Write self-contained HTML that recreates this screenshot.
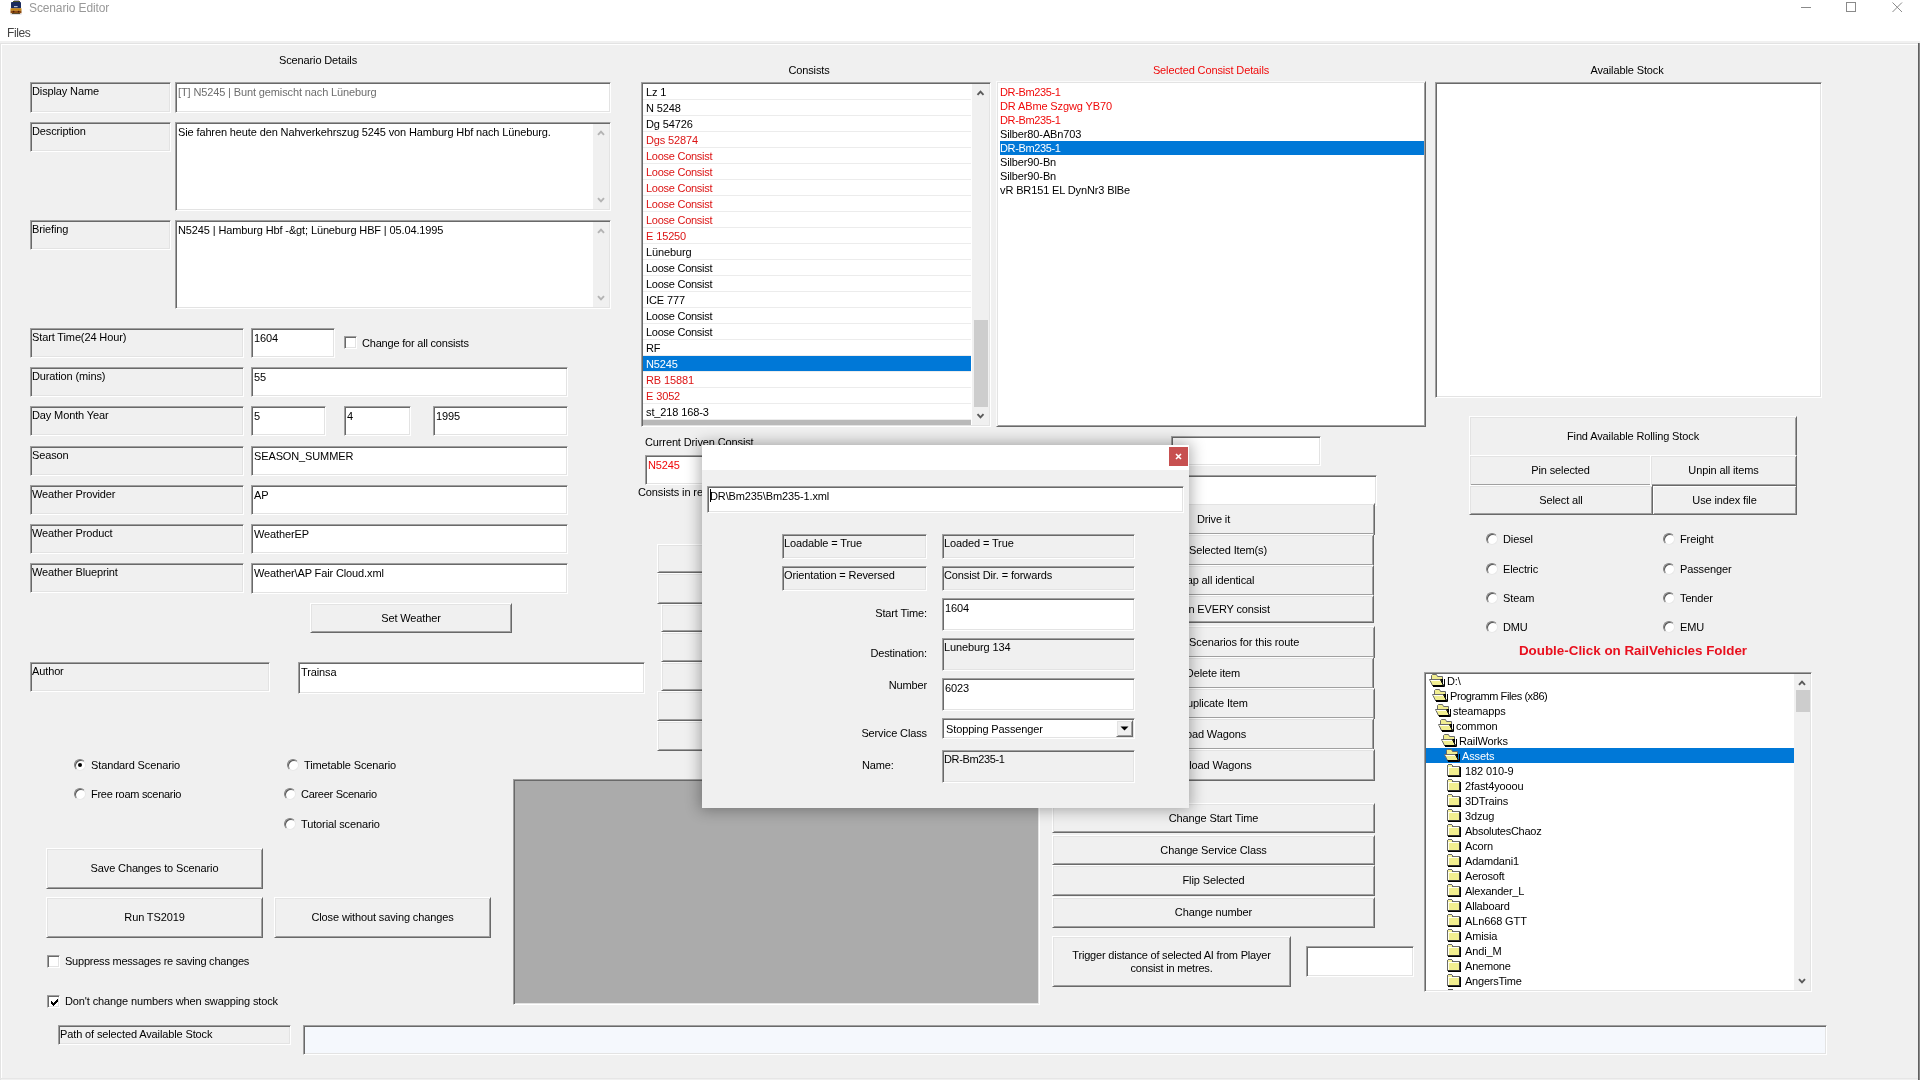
<!DOCTYPE html>
<html><head><meta charset="utf-8"><title>Scenario Editor</title>
<style>
*{box-sizing:border-box;margin:0;padding:0}
html,body{width:1920px;height:1080px;overflow:hidden;background:#fff}
body{position:relative;font-family:"Liberation Sans",sans-serif;font-size:11px;color:#000;line-height:13px;letter-spacing:-0.125px}
div{position:absolute}
.t{white-space:nowrap}
.c{text-align:center}
.sk{border:1px solid;border-color:#a0a0a0 #fff #fff #a0a0a0;box-shadow:inset 1px 1px 0 #696969,inset -1px -1px 0 #e3e3e3;overflow:hidden}
.lb{background:#f0f0f0}
.lb span{position:absolute;left:1px;top:2px;white-space:nowrap}
.tb{background:#fff}
.tb span{position:absolute;left:2px;top:3px;white-space:nowrap}
.bt{border:1px solid;border-color:#fff #696969 #696969 #fff;box-shadow:inset 1px 1px 0 #e3e3e3,inset -1px -1px 0 #a0a0a0;background:#f0f0f0;display:flex;align-items:center;justify-content:center;text-align:center;overflow:hidden}
.bt span{white-space:nowrap;position:relative;top:0px}
.foc{border-color:#696969;box-shadow:inset 1px 1px 0 #fff,inset -1px -1px 0 #a0a0a0}
.rd{width:12px;height:12px;border-radius:50%;background:#fff;border:1px solid;border-color:#808080 #e8e8e8 #e8e8e8 #808080;box-shadow:inset 1px 1px 0 #555}
.rd i{position:absolute;left:3px;top:3px;width:4px;height:4px;border-radius:50%;background:#000}
.cb{width:13px;height:13px;background:#fff}
.red{color:#f00a0a}
.rs{border:1px solid;border-color:#fbfbfb #696969 #696969 #fbfbfb;box-shadow:inset 1px 1px 0 #e3e3e3,inset -1px -1px 0 #a0a0a0}
.cmb span{left:3px;top:4px}
.redt span{color:#f00a0a}
.li span,.li2 span{position:absolute;left:3px;top:2px;white-space:nowrap}
.li{border-bottom:1px solid #ececec}
.li.red{color:#dc1414}
.li2 span{left:0px;top:1px}
.ml span{white-space:normal;line-height:13px}
.sel{background:#0078d7;color:#fff}
#root{left:0;top:0;width:1920px;height:1080px;will-change:transform}
</style></head><body><div id="root">
<div class="" style="left:0px;top:0px;width:1920px;height:41px;background:#fff"></div>
<div class="" style="left:0px;top:41px;width:1920px;height:1039px;background:#f0f0f0"></div>
<div class="" style="left:0px;top:43px;width:1920px;height:1px;background:#e3e3e3"></div>
<div class="" style="left:0px;top:43px;width:1px;height:1037px;background:#e3e3e3"></div>
<div class="" style="left:1px;top:44px;width:1917px;height:1px;background:#fff"></div>
<div class="" style="left:1px;top:44px;width:1px;height:1034px;background:#fff"></div>
<div class="" style="left:1918px;top:43px;width:1px;height:1037px;background:#606060"></div>
<div class="" style="left:1919px;top:43px;width:1px;height:1037px;background:#8a8a8a"></div>
<div class="" style="left:0px;top:1078px;width:1918px;height:1px;background:#e6e6e6"></div>
<svg style="position:absolute;left:8px;top:0" width="16" height="16" viewBox="8 0 16 16"><rect x="14" y="0" width="5" height="1" fill="#b4adc4"/><rect x="13" y="1" width="7" height="1.3" fill="#4a5024"/><rect x="11" y="2" width="10" height="6.6" rx="0.8" fill="#1c2c5e"/><rect x="14" y="6" width="3.6" height="1.2" fill="#b8c0d4"/><rect x="10.5" y="8.3" width="11" height="2.5" fill="#c88410"/><rect x="10.5" y="10.7" width="11" height="2.6" fill="#8e4c12"/><circle cx="13.6" cy="11.6" r="0.9" fill="#4a1a08"/><circle cx="18.6" cy="11.6" r="0.9" fill="#4a1a08"/><rect x="12" y="13.2" width="8" height="0.9" fill="#3a3010"/><rect x="10.5" y="14.1" width="11" height="0.8" fill="#dcdce8"/></svg>
<div class="t " style="left:29px;top:1px;font-size:12px;line-height:15px;color:#999">Scenario Editor</div>
<div class="t " style="left:7px;top:26px;font-size:12px;line-height:15px;color:#444;letter-spacing:-0.4px">Files</div>
<svg style="position:absolute;left:1800px;top:0" width="110" height="16" viewBox="0 0 110 16"><g stroke="#8a8a8a" stroke-width="1" fill="none"><path d="M1 7.5H11"/><rect x="46.5" y="2.5" width="9" height="9"/><path d="M92.5 2.5l9.5 9.5M102 2.5l-9.5 9.5"/></g></svg>
<div class="t c " style="left:118px;width:400px;top:54px;">Scenario Details</div>
<div class="sk lb" style="left:30px;top:82px;width:141px;height:31px;"><span>Display Name</span></div>
<div class="sk lb" style="left:30px;top:122px;width:141px;height:30px;"><span>Description</span></div>
<div class="sk lb" style="left:30px;top:220px;width:141px;height:30px;"><span>Briefing</span></div>
<div class="sk tb " style="left:175px;top:82px;width:436px;height:31px;color:#6d6d6d"><span>[T] N5245 | Bunt gemischt nach L&uuml;neburg</span></div>
<div class="sk tb " style="left:175px;top:122px;width:436px;height:89px;"><span>Sie fahren heute den Nahverkehrszug 5245 von Hamburg Hbf nach L&uuml;neburg.</span></div>
<div class="sk tb " style="left:175px;top:220px;width:436px;height:89px;"><span>N5245 | Hamburg Hbf -&amp;gt; L&uuml;neburg HBF | 05.04.1995</span></div>
<svg style="position:absolute;left:593px;top:124px" width="16" height="85" viewBox="0 0 16 85"><rect width="16" height="85" fill="#f0f0f0"/><g fill="none" stroke="#b4b4b4" stroke-width="1.9"><path d="M5.0 10.8L8.0 7.6L11.0 10.8"/><path d="M5.0 74.2L8.0 77.4L11.0 74.2"/></g></svg>
<svg style="position:absolute;left:593px;top:222px" width="16" height="85" viewBox="0 0 16 85"><rect width="16" height="85" fill="#f0f0f0"/><g fill="none" stroke="#b4b4b4" stroke-width="1.9"><path d="M5.0 10.8L8.0 7.6L11.0 10.8"/><path d="M5.0 74.2L8.0 77.4L11.0 74.2"/></g></svg>
<div class="sk lb" style="left:30px;top:328px;width:214px;height:30px;"><span>Start Time(24 Hour)</span></div>
<div class="sk lb" style="left:30px;top:367px;width:214px;height:30px;"><span>Duration (mins)</span></div>
<div class="sk lb" style="left:30px;top:406px;width:214px;height:30px;"><span>Day Month Year</span></div>
<div class="sk lb" style="left:30px;top:446px;width:214px;height:30px;"><span>Season</span></div>
<div class="sk lb" style="left:30px;top:485px;width:214px;height:30px;"><span>Weather Provider</span></div>
<div class="sk lb" style="left:30px;top:524px;width:214px;height:30px;"><span>Weather Product</span></div>
<div class="sk lb" style="left:30px;top:563px;width:214px;height:30px;"><span>Weather Blueprint</span></div>
<div class="sk tb " style="left:251px;top:328px;width:84px;height:30px;"><span>1604</span></div>
<div class="sk cb" style="left:344px;top:336px"></div>
<div class="t " style="left:362px;top:337px;"><b style="font-weight:normal;letter-spacing:-0.2px">Change for all consists</b></div>
<div class="sk tb " style="left:251px;top:367px;width:317px;height:30px;"><span>55</span></div>
<div class="sk tb " style="left:251px;top:406px;width:75px;height:30px;"><span>5</span></div>
<div class="sk tb " style="left:344px;top:406px;width:67px;height:30px;"><span>4</span></div>
<div class="sk tb " style="left:433px;top:406px;width:135px;height:30px;"><span>1995</span></div>
<div class="sk tb " style="left:251px;top:446px;width:317px;height:30px;"><span>SEASON_SUMMER</span></div>
<div class="sk tb " style="left:251px;top:485px;width:317px;height:30px;"><span>AP</span></div>
<div class="sk tb " style="left:251px;top:524px;width:317px;height:30px;"><span>WeatherEP</span></div>
<div class="sk tb " style="left:251px;top:563px;width:317px;height:31px;"><span>Weather\AP Fair Cloud.xml</span></div>
<div class="bt " style="left:310px;top:603px;width:202px;height:30px;"><span>Set Weather</span></div>
<div class="sk lb" style="left:30px;top:662px;width:240px;height:30px;"><span>Author</span></div>
<div class="sk tb " style="left:298px;top:662px;width:347px;height:32px;"><span>Trainsa</span></div>
<div class="rd" style="left:74px;top:759px"><i></i></div>
<div class="t " style="left:91px;top:759px;">Standard Scenario</div>
<div class="rd" style="left:74px;top:788px"></div>
<div class="t " style="left:91px;top:788px;"><b style="font-weight:normal;letter-spacing:-0.29px">Free roam scenario</b></div>
<div class="rd" style="left:287px;top:759px"></div>
<div class="t " style="left:304px;top:759px;">Timetable Scenario</div>
<div class="rd" style="left:284px;top:788px"></div>
<div class="t " style="left:301px;top:788px;"><b style="font-weight:normal;letter-spacing:-0.285px">Career Scenario</b></div>
<div class="rd" style="left:284px;top:818px"></div>
<div class="t " style="left:301px;top:818px;">Tutorial scenario</div>
<div class="bt " style="left:46px;top:848px;width:217px;height:41px;"><span>Save Changes to Scenario</span></div>
<div class="bt " style="left:46px;top:897px;width:217px;height:41px;"><span>Run TS2019</span></div>
<div class="bt " style="left:274px;top:897px;width:217px;height:41px;"><span>Close without saving changes</span></div>
<div class="sk cb" style="left:47px;top:955px"></div>
<div class="t " style="left:65px;top:955px;"><b style="font-weight:normal;letter-spacing:-0.225px">Suppress messages re saving changes</b></div>
<div class="sk cb" style="left:47px;top:995px"><svg style="position:absolute;left:2px;top:2px" width="9" height="9" viewBox="0 0 9 9" shape-rendering="crispEdges"><path d="M1 3v3l2 2 5-5V0L3 5z" fill="#000"/></svg></div>
<div class="t " style="left:65px;top:995px;">Don't change numbers when swapping stock</div>
<div class="sk lb" style="left:58px;top:1025px;width:233px;height:20px;"><span>Path of selected Available Stock</span></div>
<div class="sk tb " style="left:303px;top:1025px;width:1524px;height:30px;background:#f5f8fd"><span></span></div>
<div class="sk" style="left:513px;top:779px;width:527px;height:226px;background:#ababab"></div>
<div class="t c " style="left:609px;width:400px;top:64px;">Consists</div>
<div class="sk" style="left:641px;top:82px;width:350px;height:345px;background:#fff"></div>
<div class="li " style="left:643px;top:84px;width:328px;height:16px"><span>Lz 1</span></div>
<div class="li " style="left:643px;top:100px;width:328px;height:16px"><span>N 5248</span></div>
<div class="li " style="left:643px;top:116px;width:328px;height:16px"><span>Dg 54726</span></div>
<div class="li red" style="left:643px;top:132px;width:328px;height:16px"><span>Dgs 52874</span></div>
<div class="li red" style="left:643px;top:148px;width:328px;height:16px"><span><b style="font-weight:normal;letter-spacing:-0.26px">Loose Consist</b></span></div>
<div class="li red" style="left:643px;top:164px;width:328px;height:16px"><span><b style="font-weight:normal;letter-spacing:-0.26px">Loose Consist</b></span></div>
<div class="li red" style="left:643px;top:180px;width:328px;height:16px"><span><b style="font-weight:normal;letter-spacing:-0.26px">Loose Consist</b></span></div>
<div class="li red" style="left:643px;top:196px;width:328px;height:16px"><span><b style="font-weight:normal;letter-spacing:-0.26px">Loose Consist</b></span></div>
<div class="li red" style="left:643px;top:212px;width:328px;height:16px"><span><b style="font-weight:normal;letter-spacing:-0.26px">Loose Consist</b></span></div>
<div class="li red" style="left:643px;top:228px;width:328px;height:16px"><span>E 15250</span></div>
<div class="li " style="left:643px;top:244px;width:328px;height:16px"><span>L&uuml;neburg</span></div>
<div class="li " style="left:643px;top:260px;width:328px;height:16px"><span><b style="font-weight:normal;letter-spacing:-0.26px">Loose Consist</b></span></div>
<div class="li " style="left:643px;top:276px;width:328px;height:16px"><span><b style="font-weight:normal;letter-spacing:-0.26px">Loose Consist</b></span></div>
<div class="li " style="left:643px;top:292px;width:328px;height:16px"><span>ICE 777</span></div>
<div class="li " style="left:643px;top:308px;width:328px;height:16px"><span><b style="font-weight:normal;letter-spacing:-0.26px">Loose Consist</b></span></div>
<div class="li " style="left:643px;top:324px;width:328px;height:16px"><span><b style="font-weight:normal;letter-spacing:-0.26px">Loose Consist</b></span></div>
<div class="li " style="left:643px;top:340px;width:328px;height:16px"><span>RF</span></div>
<div class="li sel" style="left:643px;top:356px;width:328px;height:16px"><span>N5245</span></div>
<div class="li red" style="left:643px;top:372px;width:328px;height:16px"><span>RB 15881</span></div>
<div class="li red" style="left:643px;top:388px;width:328px;height:16px"><span>E 3052</span></div>
<div class="li " style="left:643px;top:404px;width:328px;height:16px"><span>st_218 168-3</span></div>
<div class="" style="left:972px;top:84px;width:17px;height:341px;background:#f0f0f0"></div>
<div class="" style="left:974px;top:320px;width:14px;height:87px;background:#cdcdcd"></div>
<svg style="position:absolute;left:972px;top:84px" width="17" height="341" viewBox="0 0 17 341"><g fill="none" stroke="#5a5a5a" stroke-width="1.9"><path d="M5.5 10.8L8.5 7.6L11.5 10.8"/><path d="M5.5 330.2L8.5 333.4L11.5 330.2"/></g></svg>
<div class="" style="left:643px;top:420px;width:328px;height:5px;background:#b9b9b9"></div>
<div class="t c red" style="left:1011px;width:400px;top:64px;">Selected Consist Details</div>
<div class="rs" style="left:996px;top:81px;width:430px;height:346px;background:#fff"></div>
<div class="li2 red" style="left:1000px;top:85px;width:424px;height:14px"><span><b style="font-weight:normal;letter-spacing:-0.36px">DR-Bm235-1</b></span></div>
<div class="li2 red" style="left:1000px;top:99px;width:424px;height:14px"><span>DR ABme Szgwg YB70</span></div>
<div class="li2 red" style="left:1000px;top:113px;width:424px;height:14px"><span><b style="font-weight:normal;letter-spacing:-0.36px">DR-Bm235-1</b></span></div>
<div class="li2 " style="left:1000px;top:127px;width:424px;height:14px"><span>Silber80-ABn703</span></div>
<div class="li2 sel" style="left:1000px;top:141px;width:424px;height:14px"><span><b style="font-weight:normal;letter-spacing:-0.36px">DR-Bm235-1</b></span></div>
<div class="li2 " style="left:1000px;top:155px;width:424px;height:14px"><span>Silber90-Bn</span></div>
<div class="li2 " style="left:1000px;top:169px;width:424px;height:14px"><span>Silber90-Bn</span></div>
<div class="li2 " style="left:1000px;top:183px;width:424px;height:14px"><span>vR BR151 EL DynNr3 BlBe</span></div>
<div class="t c " style="left:1427px;width:400px;top:64px;">Available Stock</div>
<div class="sk" style="left:1435px;top:82px;width:387px;height:316px;background:#fff"></div>
<div class="bt " style="left:1469px;top:416px;width:328px;height:41px;"><span>Find Available Rolling Stock</span></div>
<div class="bt " style="left:1469px;top:455px;width:183px;height:31px;"><span>Pin selected</span></div>
<div class="bt " style="left:1650px;top:455px;width:147px;height:31px;"><span>Unpin all items</span></div>
<div class="bt " style="left:1469px;top:485px;width:184px;height:30px;"><span>Select all</span></div>
<div class="bt foc" style="left:1652px;top:485px;width:145px;height:30px;"><span>Use index file</span></div>
<div class="rd" style="left:1486px;top:533px"></div>
<div class="t " style="left:1503px;top:533px;">Diesel</div>
<div class="rd" style="left:1486px;top:563px"></div>
<div class="t " style="left:1503px;top:563px;">Electric</div>
<div class="rd" style="left:1486px;top:592px"></div>
<div class="t " style="left:1503px;top:592px;">Steam</div>
<div class="rd" style="left:1486px;top:621px"></div>
<div class="t " style="left:1503px;top:621px;">DMU</div>
<div class="rd" style="left:1663px;top:533px"></div>
<div class="t " style="left:1680px;top:533px;">Freight</div>
<div class="rd" style="left:1663px;top:563px"></div>
<div class="t " style="left:1680px;top:563px;">Passenger</div>
<div class="rd" style="left:1663px;top:592px"></div>
<div class="t " style="left:1680px;top:592px;">Tender</div>
<div class="rd" style="left:1663px;top:621px"></div>
<div class="t " style="left:1680px;top:621px;">EMU</div>
<div class="t c " style="left:1433px;width:400px;top:643px;font-weight:bold;font-size:13.4px;line-height:16px;color:#e8101e;letter-spacing:-0.01px">Double-Click on RailVehicles Folder</div>
<div class="sk" style="left:1424px;top:672px;width:388px;height:320px;background:#fff"></div>
<svg width="0" height="0" style="position:absolute"><defs>
<g id="fc" shape-rendering="crispEdges"><rect x="2" y="0" width="4" height="1" fill="#6a6a6a"/><rect x="1" y="1" width="6" height="2" fill="#6a6a6a"/><rect x="1" y="2" width="13" height="10" fill="#6a6a6a"/><rect x="2" y="1" width="4" height="2" fill="#f6f3a0"/><rect x="2" y="3" width="11" height="8" fill="#f1ee90"/><rect x="2" y="3" width="11" height="1" fill="#fffff4"/><rect x="2" y="3" width="1" height="8" fill="#fffff4"/><rect x="13" y="3" width="1" height="9" fill="#303030"/><rect x="14" y="3" width="1" height="10" fill="#000"/><rect x="2" y="12" width="13" height="1" fill="#000"/><rect x="2" y="11" width="12" height="1" fill="#303030"/></g>
<g id="fo"><path d="M3.5 5.5V1.5L4.5 0.5H8.5L9.5 2.5H14.5V5.5" fill="#f1ee90" stroke="#6a6a6a" stroke-width="1"/><path d="M12 5H15V12Z" fill="#000"/><path d="M1.5 5.5H12.5L15.5 11.5H4.5Z" fill="#f1ee90" stroke="#6a6a6a" stroke-width="1"/><path d="M2.5 6.5H12" stroke="#fffff4" stroke-width="1"/><path d="M12.5 5.5L15.5 11.5H4.5" fill="none" stroke="#000" stroke-width="1"/><path d="M5 12.5H16.5V5" fill="none" stroke="#000" stroke-width="1"/></g>
</defs></svg>
<svg style="position:absolute;left:1428px;top:674px" width="17" height="14" viewBox="0 0 17 14"><use href="#fo"/></svg>
<div class="t " style="left:1447px;top:675px;">D:\</div>
<svg style="position:absolute;left:1431px;top:689px" width="17" height="14" viewBox="0 0 17 14"><use href="#fo"/></svg>
<div class="t " style="left:1450px;top:690px;letter-spacing:-0.42px;">Programm Files (x86)</div>
<svg style="position:absolute;left:1434px;top:704px" width="17" height="14" viewBox="0 0 17 14"><use href="#fo"/></svg>
<div class="t " style="left:1453px;top:705px;">steamapps</div>
<svg style="position:absolute;left:1437px;top:719px" width="17" height="14" viewBox="0 0 17 14"><use href="#fo"/></svg>
<div class="t " style="left:1456px;top:720px;">common</div>
<svg style="position:absolute;left:1440px;top:734px" width="17" height="14" viewBox="0 0 17 14"><use href="#fo"/></svg>
<div class="t " style="left:1459px;top:735px;">RailWorks</div>
<div class="" style="left:1426px;top:748px;width:368px;height:15px;background:#0078d7"></div>
<svg style="position:absolute;left:1443px;top:749px" width="17" height="14" viewBox="0 0 17 14"><use href="#fo"/></svg>
<div class="t " style="left:1462px;top:750px;color:#fff;">Assets</div>
<svg style="position:absolute;left:1446px;top:764px" width="17" height="14" viewBox="0 0 17 14"><use href="#fc"/></svg>
<div class="t " style="left:1465px;top:765px;">182 010-9</div>
<svg style="position:absolute;left:1446px;top:779px" width="17" height="14" viewBox="0 0 17 14"><use href="#fc"/></svg>
<div class="t " style="left:1465px;top:780px;">2fast4yooou</div>
<svg style="position:absolute;left:1446px;top:794px" width="17" height="14" viewBox="0 0 17 14"><use href="#fc"/></svg>
<div class="t " style="left:1465px;top:795px;">3DTrains</div>
<svg style="position:absolute;left:1446px;top:809px" width="17" height="14" viewBox="0 0 17 14"><use href="#fc"/></svg>
<div class="t " style="left:1465px;top:810px;">3dzug</div>
<svg style="position:absolute;left:1446px;top:824px" width="17" height="14" viewBox="0 0 17 14"><use href="#fc"/></svg>
<div class="t " style="left:1465px;top:825px;"><b style="font-weight:normal;letter-spacing:-0.265px">AbsolutesChaoz</b></div>
<svg style="position:absolute;left:1446px;top:839px" width="17" height="14" viewBox="0 0 17 14"><use href="#fc"/></svg>
<div class="t " style="left:1465px;top:840px;">Acorn</div>
<svg style="position:absolute;left:1446px;top:854px" width="17" height="14" viewBox="0 0 17 14"><use href="#fc"/></svg>
<div class="t " style="left:1465px;top:855px;"><b style="font-weight:normal;letter-spacing:-0.2px">Adamdani1</b></div>
<svg style="position:absolute;left:1446px;top:869px" width="17" height="14" viewBox="0 0 17 14"><use href="#fc"/></svg>
<div class="t " style="left:1465px;top:870px;"><b style="font-weight:normal;letter-spacing:-0.2px">Aerosoft</b></div>
<svg style="position:absolute;left:1446px;top:884px" width="17" height="14" viewBox="0 0 17 14"><use href="#fc"/></svg>
<div class="t " style="left:1465px;top:885px;"><b style="font-weight:normal;letter-spacing:-0.24px">Alexander_L</b></div>
<svg style="position:absolute;left:1446px;top:899px" width="17" height="14" viewBox="0 0 17 14"><use href="#fc"/></svg>
<div class="t " style="left:1465px;top:900px;"><b style="font-weight:normal;letter-spacing:-0.2px">Allaboard</b></div>
<svg style="position:absolute;left:1446px;top:914px" width="17" height="14" viewBox="0 0 17 14"><use href="#fc"/></svg>
<div class="t " style="left:1465px;top:915px;">ALn668 GTT</div>
<svg style="position:absolute;left:1446px;top:929px" width="17" height="14" viewBox="0 0 17 14"><use href="#fc"/></svg>
<div class="t " style="left:1465px;top:930px;">Amisia</div>
<svg style="position:absolute;left:1446px;top:944px" width="17" height="14" viewBox="0 0 17 14"><use href="#fc"/></svg>
<div class="t " style="left:1465px;top:945px;">Andi_M</div>
<svg style="position:absolute;left:1446px;top:959px" width="17" height="14" viewBox="0 0 17 14"><use href="#fc"/></svg>
<div class="t " style="left:1465px;top:960px;"><b style="font-weight:normal;letter-spacing:-0.2px">Anemone</b></div>
<svg style="position:absolute;left:1446px;top:974px" width="17" height="14" viewBox="0 0 17 14"><use href="#fc"/></svg>
<div class="t " style="left:1465px;top:975px;"><b style="font-weight:normal;letter-spacing:-0.23px">AngersTime</b></div>
<svg style="position:absolute;left:1447px;top:989px" width="17" height="1" viewBox="0 0 17 1"><rect x="1" y="0" width="5" height="1" fill="#555"/></svg>
<div class="" style="left:1794px;top:674px;width:16px;height:316px;background:#f0f0f0"></div>
<div class="" style="left:1796px;top:690px;width:14px;height:22px;background:#cdcdcd"></div>
<svg style="position:absolute;left:1794px;top:674px" width="16" height="316" viewBox="0 0 16 316"><g fill="none" stroke="#5a5a5a" stroke-width="1.9"><path d="M5.0 10.8L8.0 7.6L11.0 10.8"/><path d="M5.0 305.2L8.0 308.4L11.0 305.2"/></g></svg>
<div class="t " style="left:645px;top:436px;">Current Driven Consist</div>
<div class="sk tb redt" style="left:645px;top:455px;width:115px;height:30px;"><span>N5245</span></div>
<div class="t " style="left:638px;top:486px;">Consists in reverse</div>
<div class="sk tb " style="left:1171px;top:436px;width:150px;height:30px;"><span></span></div>
<div class="sk tb " style="left:1052px;top:475px;width:325px;height:31px;"><span></span></div>
<div class="bt " style="left:657px;top:544px;width:243px;height:29px;"><span></span></div>
<div class="bt " style="left:657px;top:573px;width:243px;height:31px;"><span></span></div>
<div class="bt " style="left:661px;top:604px;width:239px;height:28px;"><span></span></div>
<div class="bt " style="left:661px;top:632px;width:239px;height:30px;"><span></span></div>
<div class="bt " style="left:661px;top:662px;width:239px;height:29px;"><span></span></div>
<div class="bt " style="left:657px;top:691px;width:243px;height:30px;"><span></span></div>
<div class="bt " style="left:657px;top:721px;width:243px;height:30px;"><span></span></div>
<div class="bt " style="left:1052px;top:503px;width:323px;height:32px;"><span>Drive it</span></div>
<div class="bt " style="left:1052px;top:534px;width:322px;height:32px;"><span>Swap Selected Item(s)</span></div>
<div class="bt " style="left:1052px;top:565px;width:322px;height:31px;"><span>Swap all identical</span></div>
<div class="bt " style="left:1052px;top:595px;width:322px;height:28px;"><span>Swap in EVERY consist</span></div>
<div class="bt " style="left:1052px;top:626px;width:323px;height:32px;"><span>Show all the Scenarios for this route</span></div>
<div class="bt " style="left:1052px;top:657px;width:322px;height:32px;"><span>Delete item</span></div>
<div class="bt " style="left:1052px;top:688px;width:323px;height:31px;"><span>Duplicate Item</span></div>
<div class="bt " style="left:1052px;top:718px;width:322px;height:32px;"><span>Load Wagons</span></div>
<div class="bt " style="left:1052px;top:749px;width:323px;height:32px;"><span>Unload Wagons</span></div>
<div class="bt " style="left:1052px;top:803px;width:323px;height:30px;"><span>Change Start Time</span></div>
<div class="bt " style="left:1052px;top:835px;width:323px;height:30px;"><span>Change Service Class</span></div>
<div class="bt " style="left:1052px;top:865px;width:323px;height:31px;"><span>Flip Selected</span></div>
<div class="bt " style="left:1052px;top:897px;width:323px;height:31px;"><span>Change number</span></div>
<div class="bt ml" style="left:1052px;top:936px;width:239px;height:51px;"><span><b style="font-weight:normal;letter-spacing:-0.2px">Trigger distance of selected AI from Player<br>consist in metres.</b></span></div>
<div class="sk tb " style="left:1306px;top:946px;width:108px;height:31px;"><span></span></div>
<div id="dlg" style="left:702px;top:445px;width:487px;height:363px;background:#f0f0f0;box-shadow:0 0 14px 2px rgba(0,0,0,.32)">
<div class="" style="left:0px;top:0px;width:487px;height:25px;background:#fff"></div>
<div style="left:467px;top:2px;width:19px;height:19px;background:#c75050"><svg width="19" height="19" viewBox="0 0 19 19"><path d="M7 7l5 5M12 7l-5 5" stroke="#fff" stroke-width="1.6" fill="none"/></svg></div>
<div class="sk tb " style="left:5px;top:41px;width:477px;height:27px;"><span>DR\Bm235\Bm235-1.xml</span></div>
<div class="" style="left:8px;top:44px;width:1px;height:13px;background:#000"></div>
<div class="sk lb" style="left:80px;top:89px;width:145px;height:25px;"><span>Loadable = True</span></div>
<div class="sk lb" style="left:240px;top:89px;width:193px;height:25px;"><span>Loaded = True</span></div>
<div class="sk lb" style="left:80px;top:121px;width:145px;height:25px;"><span>Orientation = Reversed</span></div>
<div class="sk lb" style="left:240px;top:121px;width:193px;height:25px;"><span>Consist Dir. = forwards</span></div>
<div class="sk tb " style="left:240px;top:153px;width:193px;height:33px;"><span>1604</span></div>
<div class="sk lb" style="left:240px;top:193px;width:193px;height:33px;"><span>Luneburg 134</span></div>
<div class="sk tb " style="left:240px;top:233px;width:193px;height:33px;"><span>6023</span></div>
<div class="sk lb" style="left:240px;top:305px;width:193px;height:33px;"><span><b style="font-weight:normal;letter-spacing:-0.36px">DR-Bm235-1</b></span></div>
<div class="t" style="right:262px;top:162px">Start Time:</div>
<div class="t" style="right:262px;top:202px">Destination:</div>
<div class="t" style="right:262px;top:234px">Number</div>
<div class="t" style="right:262px;top:282px">Service Class</div>
<div class="t " style="left:160px;top:314px;">Name:</div>
<div class="sk tb cmb" style="left:240px;top:273px;width:193px;height:21px;"><span>Stopping Passenger</span></div>
<div class="bt" style="left:414px;top:275px;width:17px;height:17px"><svg width="9" height="5" viewBox="0 0 9 5"><path d="M0.5 0.5H8.5L4.5 4.5Z" fill="#000"/></svg></div>
</div>
</div></body></html>
